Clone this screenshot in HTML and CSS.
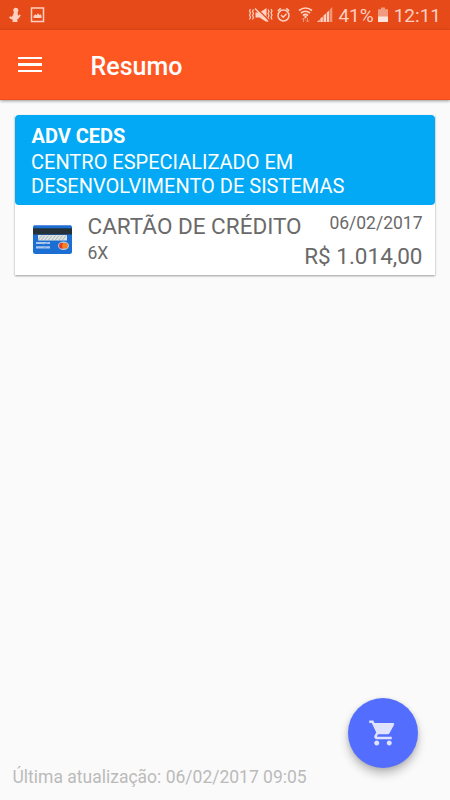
FILE: index.html
```html
<!DOCTYPE html>
<html lang="pt-BR">
<head>
<meta charset="utf-8">
<title>Resumo</title>
<link rel="stylesheet" href="styles.css">
</head>
<body>
<div class="screen">
  <div class="status">
    <svg class="status-left" width="50" height="30" viewBox="0 0 50 30" fill="#ffcfc0">
      <circle cx="15.800" cy="10.300" r="2.500"/>
      <path d="M14 12h3.500l.5 4 1.200-1.500 1.600.8-2.300 3.400-1.200.5.200 2.800h-5l.2-2.500c-1.500 0-3.500-1-3.500-2.200l1-1 1.500.8 1.300-2z"/>
      <path d="M31.500 8h12v13.500h-12z" fill="none" stroke="#ffcfc0" stroke-width="1.500"/>
      <path d="M33.500 18v-2l1.800-1.800 1.200 1 1.500-2 1.500 1.800 1-.8 1 1.500V18z"/>
    </svg>
    <div class="status-right">
      <svg class="signals" width="90" height="30" viewBox="0 0 90 30">
        <g fill="none" stroke="#ffcfc0" stroke-width="1.200">
          <path d="M2.500 9l-1 2 1 2-1 2 1 2-1 2.500M5.500 9.500l-1 2 1 2-1 2 1 2-1 2M20 9.500l1 2-1 2 1 2-1 2 1 2M23 9l1 2-1 2 1 2-1 2 1 2.500"/>
          <circle cx="35.500" cy="15.500" r="5.500" stroke-width="1.500"/>
          <path d="M33 15l2.200 2.200 3.300-3.500M29.800 10.800l3-2.500M41.200 10.800l-3-2.500" stroke-width="1.500"/>
          <path d="M51 10.500q6.500-5 13 0M53 13q4.500-3.500 9 0M55 15.500q2.500-2 5 0" stroke-width="1.700"/>
        </g>
        <path d="M7.500 12.500h4l7-4.500v14l-7-4.500h-4z" fill="#ffcfc0"/>
        <path d="M8 7.500L21 20.500" stroke="#e64a19" stroke-width="1.300"/>
        <path d="M7 8.500l13 13" stroke="#ffcfc0" stroke-width="1.500"/>
        <circle cx="57.500" cy="17" r="1.200" fill="#ffcfc0"/>
        <path d="M55.500 22v-4M54 19.500l1.500-1.500 1.500 1.500M59.500 18v4M58 20.500l1.500 1.500 1.500-1.500" fill="none" stroke="#f29478"/>
        <path d="M69 22l2.700-2.500V22zM72.300 22v-3.500l2.500-2V22zM75.500 22v-6.500l2.500-2V22zM78.700 22v-9.500l2.500-2V22z" fill="#ffcfc0"/>
        <path d="M81.800 22V9.500l2.500-2.500v15z" fill="#f29478"/>
      </svg>
      <span class="percent">41%</span>
      <svg class="battery" width="12" height="30" viewBox="0 0 12 30">
        <path d="M4 7.500h4v1.700h3V17H1V9.200h3z" fill="#f29a80"/>
        <path d="M1 16.500h10V22H1z" fill="#ffe3da"/>
      </svg>
      <span class="clock">12:11</span>
    </div>
  </div>
  <header class="toolbar">
    <div class="menu"><span></span><span></span><span></span></div>
    <h1>Resumo</h1>
  </header>
  <main>
    <article class="card">
      <div class="card-head">
        <strong>ADV CEDS</strong>
        <p>CENTRO ESPECIALIZADO EM<br>DESENVOLVIMENTO DE SISTEMAS</p>
      </div>
      <div class="card-body">
        <svg class="credit" width="40" height="30" viewBox="0 0 40 30">
          <rect x="0" y="0" width="39" height="29" rx="2.500" fill="#1b6fd2"/>
          <path d="M1 .5h37" stroke="#5f8fe0"/>
          <path d="M0 3.300h39v6.200H0z" fill="#263238"/>
          <path d="M5 10h29v5.500H5z" fill="#dfe3e3"/>
          <path d="M5 15l4-4.500M8 15.500l4-5M11.500 15.500l4-5M15 15.500l4-5M18.500 15.500l4-5M22 15.500l4-5M25.500 15.500l4-5M29 15.500l4-5" stroke="#9caab0" stroke-width=".8"/>
          <path d="M3 18h14M3 22.300h14" stroke="#a9c7ed" stroke-width="2.200"/>
          <path d="M10 19.500l5-2M10 23.500l4-2.500" stroke="#6f9edc" stroke-width=".7"/>
          <ellipse cx="30.500" cy="20.700" rx="5.500" ry="4.200" fill="#b8cbe6"/>
          <circle cx="29" cy="20.700" r="2.900" fill="#e53922"/>
          <circle cx="32" cy="20.700" r="2.900" fill="#f58220"/>
        </svg>
        <div class="method"><span class="large">CARTÃO DE CRÉDITO</span><span class="small">6X</span></div>
        <div class="value"><span class="small">06/02/2017</span><span class="large">R$ 1.014,00</span></div>
      </div>
    </article>
  </main>
  <footer>Última atualização: 06/02/2017 09:05</footer>
  <button class="fab" aria-label="Carrinho">
    <svg width="30" height="30" viewBox="0 0 24 24" fill="#dfe3ff"><path d="M7 18c-1.100 0-1.990.9-1.990 2S5.900 22 7 22s2-.9 2-2-.9-2-2-2zM1 2v2h2l3.600 7.590-1.350 2.450c-.16.280-.25.610-.25.960 0 1.100.9 2 2 2h12v-2H7.420c-.14 0-.25-.11-.25-.25l.03-.12.900-1.630h7.450c.75 0 1.410-.41 1.750-1.030l3.580-6.490A1 1 0 0 0 20 4H5.210l-.94-2H1zm16 16c-1.100 0-1.990.9-1.990 2s.89 2 1.990 2 2-.9 2-2-.9-2-2-2z"/></svg>
  </button>
</div>
</body>
</html>
```
FILE: styles.css
```css
* { box-sizing: border-box; }
body { margin: 0; font-family: Roboto, sans-serif; }
.screen {
  position: relative;
  display: flex;
  flex-direction: column;
  width: 450px;
  height: 800px;
  overflow: hidden;
  background: #fafafa;
}
.status {
  display: flex;
  justify-content: space-between;
  height: 30px;
  background: #e64a19;
  color: #ffcfc0;
}
.status-right { display: flex; padding-right: 9px; }
.status-right span { font-size: 19px; line-height: 31px; }
.percent { margin-left: 0; }
.battery { margin: 0 5px 0 3px; }
.toolbar {
  display: flex;
  align-items: center;
  height: 70px;
  padding: 0 18px;
  background: #ff5722;
  border-bottom: 1px solid #ee4d1b;
  box-shadow: 0 1px 3px rgba(0, 0, 0, .4);
}
.menu { display: flex; flex-direction: column; gap: 4.2px; width: 24px; }
.menu span { height: 2.5px; background: #fff; }
h1 {
  margin: 4px 0 0 48.5px;
  font-size: 25px;
  font-weight: 500;
  line-height: 30px;
  color: #fff;
}
main { flex: 1; padding: 15px 15px 0; }
.card {
  height: 160px;
  background: #fff;
  box-shadow: 0 1px 2px rgba(0, 0, 0, .38);
}
.card-head {
  height: 90px;
  padding: 10px 16px 0;
  border-radius: 4px;
  background: #03a9f4;
  color: #fff;
  font-size: 20px;
}
.card-head strong { display: block; margin-left: .5px; line-height: 23px; }
.card-head p { margin: 3px 0 0; line-height: 23.5px; }
.card-body { display: flex; padding: 8px 12.5px 0 18px; color: #6a6a6a; }
.credit { margin: 12px 14.5px 0 0; }
.method, .value { display: flex; flex-direction: column; }
.value { margin-left: auto; align-items: flex-end; }
.large { font-size: 22.5px; line-height: 26px; }
.small { font-size: 17.5px; line-height: 20px; }
.method .small { margin-top: 4px; }
.value .large { margin-top: 10px; }
footer {
  padding: 0 12.5px 13px;
  font-size: 17.5px;
  line-height: 20px;
  color: #bababa;
}
.fab {
  position: absolute;
  right: 32.5px;
  bottom: 32.5px;
  display: flex;
  align-items: center;
  justify-content: center;
  width: 70px;
  height: 70px;
  padding: 0;
  border: 0;
  border-radius: 50%;
  background: #536dfe;
  box-shadow: 0 6px 10px rgba(0, 0, 0, .24), 0 1px 4px rgba(0, 0, 0, .12);
}
```
